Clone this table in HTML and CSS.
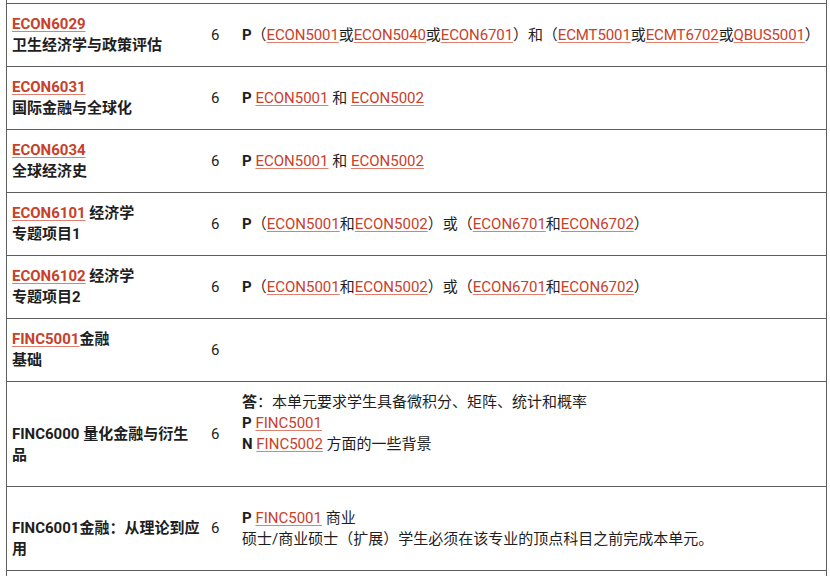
FILE: index.html
```html
<!DOCTYPE html>
<html lang="zh">
<head>
<meta charset="utf-8">
<link rel="stylesheet" href="styles.css">
</head>
<body>
<div class="wrap">
  <div class="row">
    <div class="c1"><a href="#">ECON6029</a><br>卫生经济学与政策评估</div>
    <div class="c2">6</div>
    <div class="c3 one-line"><b>P</b>（<a href="#">ECON5001</a>或<a href="#">ECON5040</a>或<a href="#">ECON6701</a>）和（<a href="#">ECMT5001</a>或<a href="#">ECMT6702</a>或<a href="#">QBUS5001</a>）</div>
  </div>
  <div class="row">
    <div class="c1"><a href="#">ECON6031</a><br>国际金融与全球化</div>
    <div class="c2">6</div>
    <div class="c3"><b>P</b> <a href="#">ECON5001</a> 和 <a href="#">ECON5002</a></div>
  </div>
  <div class="row">
    <div class="c1"><a href="#">ECON6034</a><br>全球经济史</div>
    <div class="c2">6</div>
    <div class="c3"><b>P</b> <a href="#">ECON5001</a> 和 <a href="#">ECON5002</a></div>
  </div>
  <div class="row">
    <div class="c1"><a href="#">ECON6101</a> 经济学<br>专题项目1</div>
    <div class="c2">6</div>
    <div class="c3"><b>P</b>（<a href="#">ECON5001</a>和<a href="#">ECON5002</a>）或（<a href="#">ECON6701</a>和<a href="#">ECON6702</a>）</div>
  </div>
  <div class="row">
    <div class="c1"><a href="#">ECON6102</a> 经济学<br>专题项目2</div>
    <div class="c2">6</div>
    <div class="c3"><b>P</b>（<a href="#">ECON5001</a>和<a href="#">ECON5002</a>）或（<a href="#">ECON6701</a>和<a href="#">ECON6702</a>）</div>
  </div>
  <div class="row">
    <div class="c1"><a href="#">FINC5001</a>金融<br>基础</div>
    <div class="c2">6</div>
    <div class="c3"></div>
  </div>
  <div class="row">
    <div class="c1"><br>FINC6000 量化金融与衍生品</div>
    <div class="c2">6</div>
    <div class="c3"><b>答</b>：本单元要求学生具备微积分、矩阵、统计和概率<br><b>P</b> <a href="#">FINC5001</a><br><b>N</b> <a href="#">FINC5002</a> 方面的一些背景<br>&nbsp;</div>
  </div>
  <div class="row">
    <div class="c1"><br>FINC6001金融：从理论到应用</div>
    <div class="c2">6</div>
    <div class="c3"><b>P</b> <a href="#">FINC5001</a> 商业<br>硕士/商业硕士（扩展）学生必须在该专业的顶点科目之前完成本单元。</div>
  </div>
  <div class="row tail"></div>
</div>
</body>
</html>
```

FILE: styles.css
```css
html, body {
  margin: 0;
  padding: 0;
  background: #fff;
}
body {
  font-family: Roboto, "Noto Sans CJK SC", sans-serif;
  font-size: 15px;
  line-height: 21px;
  color: #1e1e1e;
}
.wrap {
  margin-left: 6px;
  width: 819px;
  padding-top: 3px;
  border-left: 1px solid #5e5e5e;
  border-right: 1px solid #5e5e5e;
}
.row {
  display: grid;
  grid-template-columns: 199px 32px 1fr;
  align-items: center;
  border-top: 1px solid #5e5e5e;
  padding: 10px 0;
}
.row.tail {
  padding: 0;
  height: 20px;
}
.c1 {
  padding: 0 4px 0 5px;
  font-weight: 700;
}
.c2 {
  padding-left: 5px;
}
.c3 {
  padding-left: 4px;
}
.one-line {
  white-space: nowrap;
  letter-spacing: -0.1px;
}
a {
  color: #c8412b;
  text-decoration: underline;
  text-decoration-color: #e07f6e;
  text-underline-offset: 2px;
}
b {
  font-weight: 700;
}
```
